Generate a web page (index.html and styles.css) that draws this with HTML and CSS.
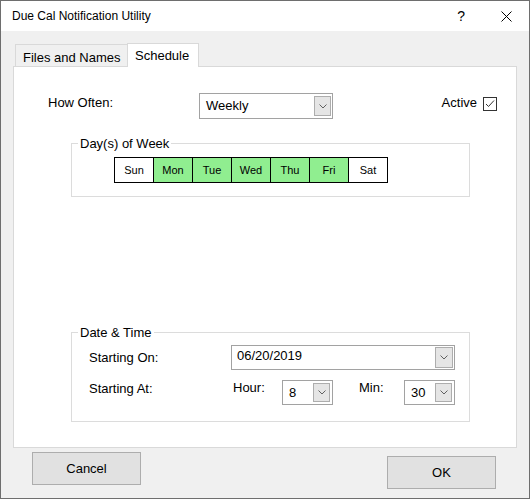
FILE: index.html
```html
<!DOCTYPE html>
<html>
<head>
<meta charset="utf-8">
<link rel="stylesheet" href="styles.css">
</head>
<body>
<div class="window">
  <div class="titlebar">
    <span class="title">Due Cal Notification Utility</span>
    <span class="help">?</span>
    <svg class="close" width="11" height="11" viewBox="0 0 11 11"><path d="M0.5 0.5 L10.5 10.5 M10.5 0.5 L0.5 10.5" stroke="#000" stroke-width="1" fill="none"/></svg>
  </div>
  <div class="tabs">
    <div class="tab">Files and Names</div>
    <div class="tab active">Schedule</div>
  </div>
  <div class="panel">
    <div class="row-often">
      <span class="lbl lbl-often">How Often:</span>
      <div class="combo combo-weekly">
        <span class="combo-text">Weekly</span>
        <span class="combo-btn"><svg width="8" height="5" viewBox="0 0 8 5"><path d="M0.5 0.5 L4 4 L7.5 0.5" stroke="#606060" fill="none"/></svg></span>
      </div>
      <div class="active-wrap">
        <span class="lbl">Active</span>
        <svg class="check" width="14" height="14" viewBox="0 0 14 14"><rect x="0.5" y="0.5" width="13" height="13" fill="#fff" stroke="#333"/><path d="M3 7 L5.5 9.5 L11 3.5" stroke="#333" stroke-width="1" fill="none"/></svg>
      </div>
    </div>

    <fieldset class="group group-days">
      <legend>Day(s) of Week</legend>
      <div class="days">
        <div class="day">Sun</div>
        <div class="day on">Mon</div>
        <div class="day on">Tue</div>
        <div class="day on">Wed</div>
        <div class="day on">Thu</div>
        <div class="day on">Fri</div>
        <div class="day">Sat</div>
      </div>
    </fieldset>

    <fieldset class="group group-date">
      <legend>Date &amp; Time</legend>
      <div class="row-on">
        <span class="lbl lbl-on">Starting On:</span>
        <div class="combo combo-date">
          <span class="combo-text">06/20/2019</span>
          <span class="combo-btn"><svg width="8" height="5" viewBox="0 0 8 5"><path d="M0.5 0.5 L4 4 L7.5 0.5" stroke="#606060" fill="none"/></svg></span>
        </div>
      </div>
      <div class="row-at">
        <span class="lbl lbl-at">Starting At:</span>
        <span class="lbl lbl-hour">Hour:</span>
        <div class="combo combo-small">
          <span class="combo-text">8</span>
          <span class="combo-btn"><svg width="8" height="5" viewBox="0 0 8 5"><path d="M0.5 0.5 L4 4 L7.5 0.5" stroke="#606060" fill="none"/></svg></span>
        </div>
        <span class="lbl lbl-min">Min:</span>
        <div class="combo combo-small">
          <span class="combo-text">30</span>
          <span class="combo-btn"><svg width="8" height="5" viewBox="0 0 8 5"><path d="M0.5 0.5 L4 4 L7.5 0.5" stroke="#606060" fill="none"/></svg></span>
        </div>
      </div>
    </fieldset>
  </div>
  <div class="buttons">
    <div class="btn btn-cancel">Cancel</div>
    <div class="btn btn-ok">OK</div>
  </div>
</div>
</body>
</html>
```
FILE: styles.css
```css
* { box-sizing: border-box; }

body {
  margin: 0;
  font-family: "Liberation Sans", Arial, sans-serif;
  color: #000;
}

.window {
  width: 530px;
  height: 499px;
  border: 1px solid #6e6e6e;
  background: #f0f0f0;
  display: flex;
  flex-direction: column;
}

.titlebar {
  height: 30px;
  flex: none;
  background: #fff;
  display: flex;
  align-items: center;
  padding-left: 11px;
  font-size: 12px;
}

.title { flex: 1; }

.help {
  font-size: 14px;
  margin-right: 36px;
  color: #000;
}

.close {
  display: block;
  margin-right: 17px;
}

.tabs {
  display: flex;
  align-items: flex-end;
  height: 23px;
  flex: none;
  margin: 12px 0 0 14px;
}

.tab {
  width: 113px;
  height: 22px;
  margin-right: -1px;
  border: 1px solid #d9d9d9;
  border-bottom: 0;
  background: #f0f0f0;
  font-size: 13px;
  line-height: 15px;
  padding: 5px 0 0 7px;
  white-space: nowrap;
}

.tab.active {
  width: 72px;
  height: 24px;
  margin-bottom: -1px;
  background: #fff;
  padding: 4px 0 0 7px;
  position: relative;
  z-index: 1;
}

.panel {
  flex: none;
  margin-left: 12px;
  width: 504px;
  height: 382px;
  border: 1px solid #d9d9d9;
  background: #fff;
  padding-top: 26px;
}

.lbl {
  font-size: 13px;
  line-height: 15px;
  white-space: nowrap;
}

.row-often {
  display: flex;
  align-items: flex-start;
  padding: 0 19px 0 34px;
}

.lbl-often {
  width: 151px;
  margin-top: 2px;
}

.combo {
  display: flex;
  align-items: flex-start;
  height: 25px;
  border: 1px solid #a2a2a2;
  background: #fff;
}

.combo-text {
  flex: 1;
  font-size: 13px;
  line-height: 15px;
  padding: 4px 0 0 6px;
}

.combo-btn {
  width: 17px;
  height: 19px;
  margin: 2px 2px 0 0;
  border: 1px solid #adadad;
  background: #e5e5e5;
  display: flex;
  align-items: center;
  justify-content: center;
}

.combo-btn svg { display: block; }

.combo-weekly {
  width: 134px;
  height: 26px;
}

.combo-weekly .combo-btn {
  height: 20px;
  margin-right: 1px;
}

.active-wrap {
  margin-left: auto;
  margin-top: 2px;
  display: flex;
  align-items: flex-start;
  gap: 6px;
}

.check {
  display: block;
  margin-top: 2px;
}

.group {
  margin: 0 0 0 57px;
  padding: 0;
  width: 399px;
  min-width: 0;
  border: 1px solid #dcdcdc;
}

.group legend {
  margin-left: 6px;
  padding: 0 2px;
  font-size: 13px;
  line-height: 15px;
}

.group-days {
  margin-top: 17px;
  padding-bottom: 13px;
}

.days {
  display: flex;
  width: max-content;
  margin: 6px 0 0 42px;
  border: 1px solid #000;
  border-right: 0;
}

.day {
  width: 39px;
  height: 24px;
  border-right: 1px solid #000;
  background: #fff;
  font-size: 11px;
  display: flex;
  align-items: center;
  justify-content: center;
}

.day.on { background: #90ee90; }

.group-date {
  margin-top: 128px;
  padding-bottom: 16px;
}

.row-on {
  display: flex;
  align-items: flex-start;
  margin-top: 5px;
  padding-left: 17px;
}

.lbl-on {
  width: 142px;
  margin-top: 5px;
}

.combo-date { width: 224px; }

.combo-date .combo-text { padding-top: 2px; padding-left: 5px; }

.combo-date .combo-btn {
  width: 18px;
  height: 21px;
  margin: 1px 1px 0 0;
}

.row-at {
  display: flex;
  align-items: flex-start;
  margin-top: 10px;
  padding-left: 17px;
}

.lbl-at {
  width: 144px;
  margin-top: 1px;
}

.lbl-hour { width: 49px; }

.lbl-min {
  width: 45px;
  margin-left: 26px;
}

.combo-small { width: 51px; }

.buttons {
  display: flex;
  align-items: flex-start;
  padding: 4px 33px 0 31px;
}

.btn {
  width: 109px;
  height: 33px;
  border: 1px solid #adadad;
  background: #e1e1e1;
  font-size: 13px;
  display: flex;
  align-items: center;
  justify-content: center;
}

.btn-ok {
  margin-left: auto;
  margin-top: 4px;
}
```
